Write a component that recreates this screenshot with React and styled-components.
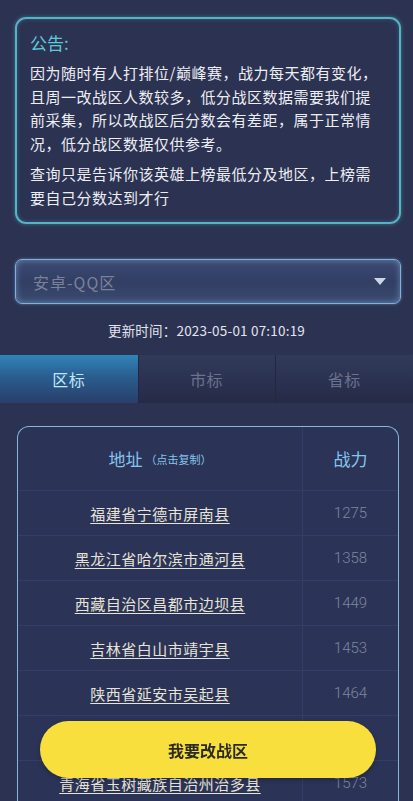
import React from "react";
import styled, { createGlobalStyle } from "styled-components";

const GlobalStyle = createGlobalStyle`
    html, body {
        margin: 0;
        padding: 0;
        background: #2c3252;
    }
    body {
        font-family: "Noto Sans CJK SC", "Noto Sans", sans-serif;
        color: #e6e8f0;
    }
    * {
        box-sizing: border-box;
    }
`;

const Page = styled.div`
    min-height: 801px;
    padding: 17px 0 120px;
`;

const Notice = styled.div`
    margin: 0 12px 0 15px;
    padding: 11px 18px 13px 13px;
    border: 2px solid #55b3c6;
    border-radius: 11px;
    box-shadow: 0 0 4px rgba(85, 179, 198, 0.5), inset 0 0 4px rgba(85, 179, 198, 0.35);
`;

const NoticeTitle = styled.div`
    font-size: 17px;
    line-height: 26px;
    color: #5ccbd9;
    margin-bottom: 5px;
`;

const NoticeText = styled.p`
    margin: 0 0 7px;
    font-size: 15px;
    line-height: 23.5px;
    letter-spacing: 0.5px;
    color: #eceef4;
    &:last-child {
        margin-bottom: 0;
    }
`;

const Select = styled.div`
    margin: 35px 12px 0 15px;
    height: 45px;
    display: flex;
    align-items: center;
    justify-content: space-between;
    padding: 0 14px 0 17px;
    border: 1.5px solid #7eb1dc;
    border-radius: 7px;
    background: linear-gradient(180deg, #3b4a72 0%, #323e64 50%, #3a4a70 100%);
    box-shadow: inset 0 0 6px rgba(140, 190, 235, 0.55), 0 0 3px rgba(126, 177, 220, 0.6);
`;

const SelectText = styled.span`
    font-size: 16px;
    letter-spacing: 1px;
    color: #7b8199;
`;

const Arrow = styled.span`
    width: 0;
    height: 0;
    border-left: 6px solid transparent;
    border-right: 6px solid transparent;
    border-top: 7px solid #c9d6e8;
`;

const UpdateTime = styled.div`
    margin-top: 17px;
    text-align: center;
    font-size: 13.5px;
    line-height: 18px;
    letter-spacing: 0.2px;
    color: #e2e5ee;
`;

const Tabs = styled.div`
    margin-top: 16px;
    display: grid;
    grid-template-columns: repeat(3, 1fr);
    height: 48px;
`;

const Tab = styled.div`
    display: flex;
    align-items: center;
    justify-content: center;
    font-size: 16px;
    letter-spacing: 0.5px;
    color: ${props => (props.active ? "#bfe6f8" : "#6a728d")};
    background: ${props =>
        props.active
            ? "linear-gradient(180deg, #3184bb 0%, #2a5d8f 45%, #283f6b 100%)"
            : "linear-gradient(180deg, #323a5a 0%, #2a3150 60%, #252b45 100%)"};
    box-shadow: ${props => (props.active ? "none" : "inset 1px 0 0 #22283f")};
`;

const Table = styled.div`
    margin: 23px 14px 0 17px;
    border: 1.5px solid #8ab3dd;
    border-bottom: none;
    border-radius: 12px 12px 0 0;
    background: #2b3457;
    overflow: hidden;
`;

const Row = styled.div`
    display: grid;
    grid-template-columns: 1fr 96px;
    height: ${props => (props.head ? "64px" : "45px")};
    border-bottom: 1px solid #343e63;
`;

const Cell = styled.div`
    display: flex;
    align-items: center;
    justify-content: center;
    & + & {
        border-left: 1px solid #343e63;
    }
`;

const HeadLabel = styled.span`
    font-size: 17px;
    color: #86c4ee;
`;

const HeadHint = styled.span`
    font-size: 11px;
    color: #86c4ee;
    margin-left: 3px;
`;

const Address = styled.span`
    font-size: 15px;
    letter-spacing: 0.5px;
    color: #e7e3d6;
    text-decoration: underline;
    text-underline-offset: 3px;
`;

const Power = styled.span`
    font-family: "Roboto", "Liberation Sans", sans-serif;
    font-size: 15px;
    font-weight: 300;
    color: #7e869f;
`;

const ActionButton = styled.button`
    position: fixed;
    left: 40px;
    bottom: 23px;
    width: 336px;
    height: 57px;
    border: none;
    border-radius: 29px;
    background: #f8df3e;
    font-family: "Noto Sans CJK SC", sans-serif;
    font-size: 16px;
    font-weight: 700;
    color: #2b2a24;
    box-shadow: 0 2px 4px rgba(0, 0, 0, 0.25);
`;

const rows = [
    { address: "福建省宁德市屏南县", power: 1275 },
    { address: "黑龙江省哈尔滨市通河县", power: 1358 },
    { address: "西藏自治区昌都市边坝县", power: 1449 },
    { address: "吉林省白山市靖宇县", power: 1453 },
    { address: "陕西省延安市吴起县", power: 1464 },
    { address: "四川省甘孜藏族自治州得荣县", power: 1521 },
    { address: "青海省玉树藏族自治州治多县", power: 1573 },
    { address: "新疆维吾尔自治区和田地区民丰县", power: 1590 },
];

const tabs = ["区标", "市标", "省标"];

const App = () => {
    return (
        <React.Fragment>
            <GlobalStyle />
            <Page>
                <Notice>
                    <NoticeTitle>公告:</NoticeTitle>
                    <NoticeText>
                        因为随时有人打排位/巅峰赛，战力每天都有变化，且周一改战区人数较多，低分战区数据需要我们提前采集，所以改战区后分数会有差距，属于正常情况，低分战区数据仅供参考。
                    </NoticeText>
                    <NoticeText>
                        查询只是告诉你该英雄上榜最低分及地区，上榜需要自己分数达到才行
                    </NoticeText>
                </Notice>
                <Select>
                    <SelectText>安卓-QQ区</SelectText>
                    <Arrow />
                </Select>
                <UpdateTime>更新时间：2023-05-01 07:10:19</UpdateTime>
                <Tabs>
                    {tabs.map((t, i) => (
                        <Tab key={t} active={i === 0}>{t}</Tab>
                    ))}
                </Tabs>
                <Table>
                    <Row head>
                        <Cell>
                            <HeadLabel>地址</HeadLabel>
                            <HeadHint>（点击复制）</HeadHint>
                        </Cell>
                        <Cell>
                            <HeadLabel>战力</HeadLabel>
                        </Cell>
                    </Row>
                    {rows.map(r => (
                        <Row key={r.address}>
                            <Cell>
                                <Address>{r.address}</Address>
                            </Cell>
                            <Cell>
                                <Power>{r.power}</Power>
                            </Cell>
                        </Row>
                    ))}
                </Table>
            </Page>
            <ActionButton>我要改战区</ActionButton>
        </React.Fragment>
    );
};

export default App;
